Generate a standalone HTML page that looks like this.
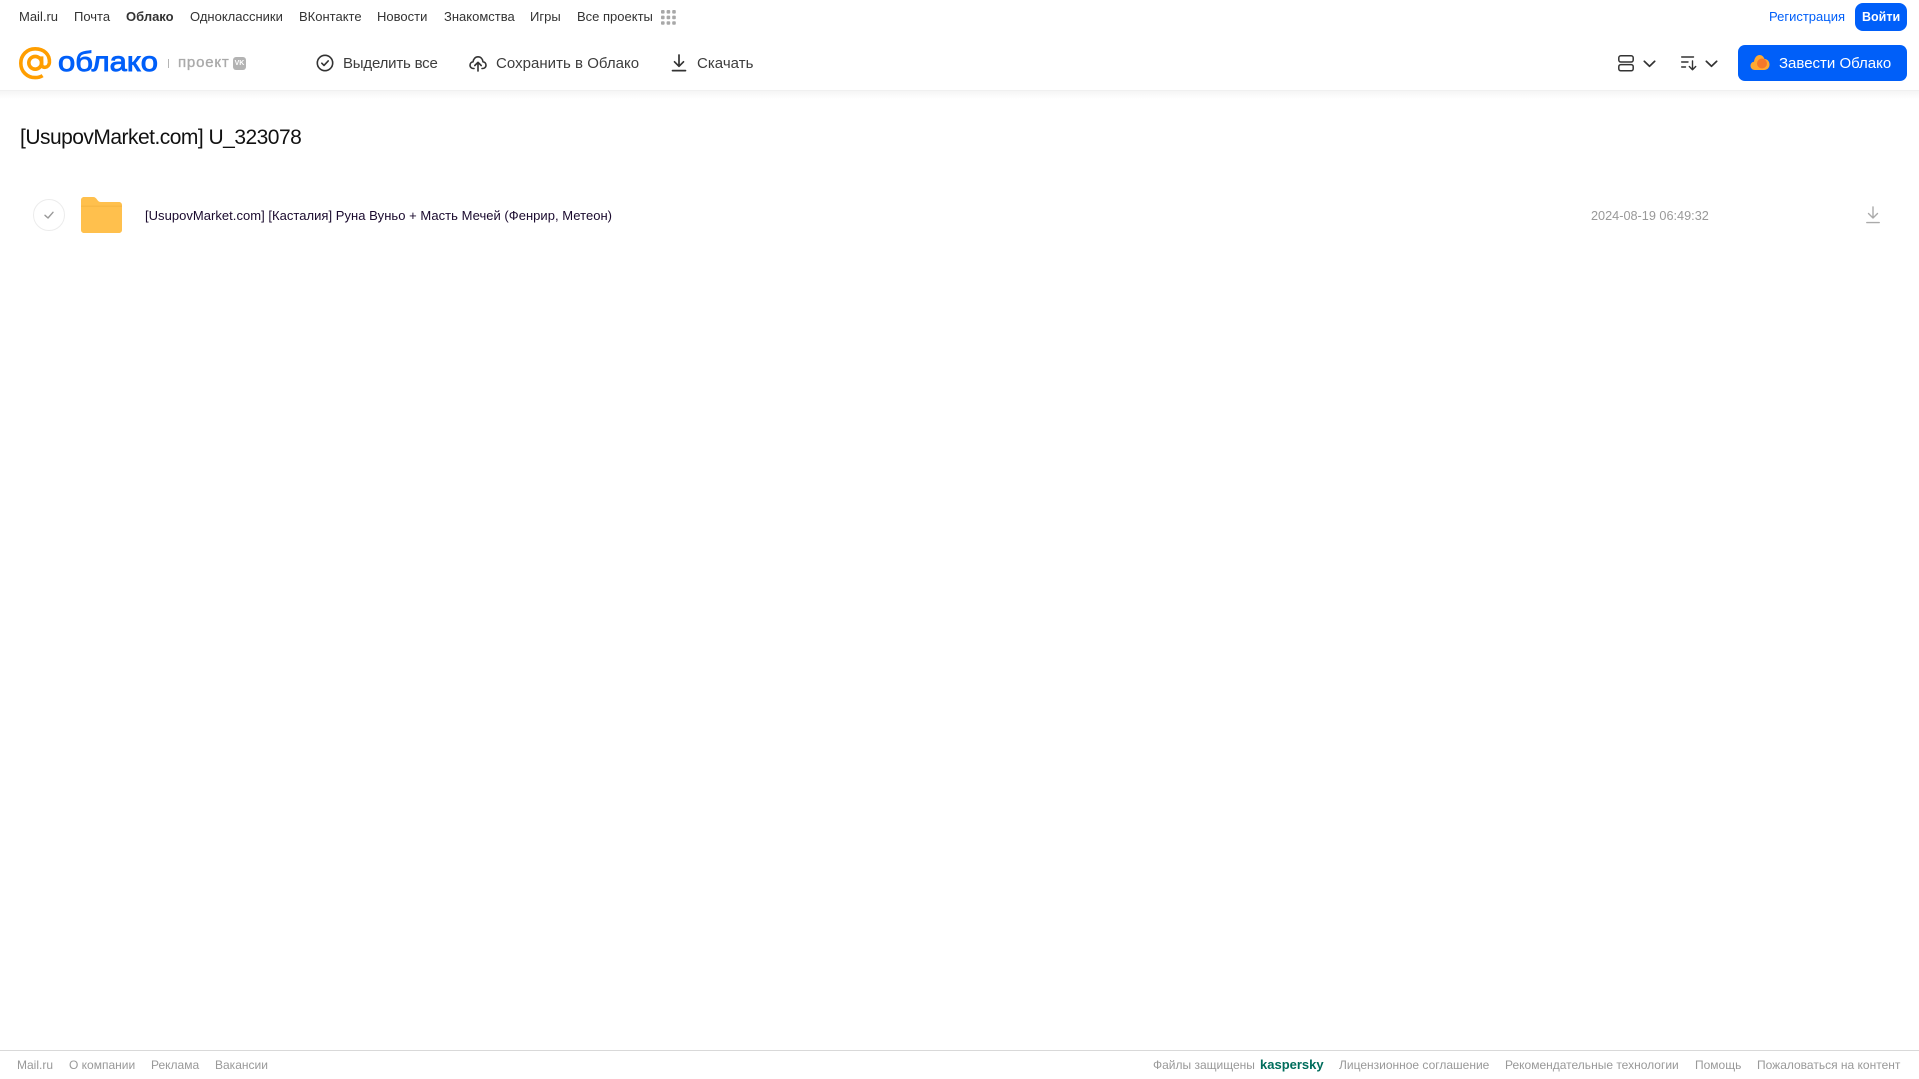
<!DOCTYPE html>
<html lang="ru">
<head>
<meta charset="utf-8">
<title>[UsupovMarket.com] U_323078</title>
<style>
html,body{margin:0;padding:0;background:#fff;}
body{position:relative;width:1919px;height:1079px;overflow:hidden;font-family:"Liberation Sans",Arial,sans-serif;}
a,span.t,h1{position:absolute;white-space:nowrap;text-decoration:none;margin:0;font-weight:normal;}
svg{position:absolute;overflow:visible;}
.nav{top:8px;font-size:13px;line-height:17px;color:#333;}
.tool{top:54px;font-size:15px;line-height:20px;color:#3d3d3d;letter-spacing:.03px;}
.foot{top:1057px;font-size:12px;line-height:16px;color:#999;}
#shadow{position:absolute;left:0;top:91px;width:1919px;height:8px;background:linear-gradient(#f5f5f5,#fff);}
#header-line{position:absolute;left:0;top:90px;width:1919px;height:1px;background:#f0f0f0;}
#footer-line{position:absolute;left:0;top:1050px;width:1919px;height:1px;background:#d9d9d9;}
.btn{position:absolute;background:#005ff9;}
</style>
</head>
<body>
<a class="nav" href="#" style="left:19px">Mail.ru</a>
<a class="nav" href="#" style="left:74px">Почта</a>
<a class="nav" href="#" style="left:126px;font-weight:bold">Облако</a>
<a class="nav" href="#" style="left:190px">Одноклассники</a>
<a class="nav" href="#" style="left:299px">ВКонтакте</a>
<a class="nav" href="#" style="left:377px">Новости</a>
<a class="nav" href="#" style="left:444px">Знакомства</a>
<a class="nav" href="#" style="left:530px">Игры</a>
<a class="nav" href="#" style="left:577px">Все проекты</a>
<svg style="left:661px;top:10px" width="15" height="15" viewBox="0 0 15 15" fill="#a8a8a8">
<rect x="0" y="0" width="3.6" height="3.6" rx="1"/><rect x="5.6" y="0" width="3.6" height="3.6" rx="1"/><rect x="11.2" y="0" width="3.6" height="3.6" rx="1"/>
<rect x="0" y="5.6" width="3.6" height="3.6" rx="1"/><rect x="5.6" y="5.6" width="3.6" height="3.6" rx="1"/><rect x="11.2" y="5.6" width="3.6" height="3.6" rx="1"/>
<rect x="0" y="11.2" width="3.6" height="3.6" rx="1"/><rect x="5.6" y="11.2" width="3.6" height="3.6" rx="1"/><rect x="11.2" y="11.2" width="3.6" height="3.6" rx="1"/>
</svg>

<a class="nav" href="#" style="left:1769px;color:#005ff9">Регистрация</a>
<div class="btn" style="left:1855px;top:3px;width:52px;height:28px;border-radius:8px"></div>
<a class="nav" href="#" style="left:1862px;top:9px;color:#fff;font-weight:bold;font-size:12.5px">Войти</a>

<!-- logo -->
<svg style="left:19px;top:47px" width="33" height="33" viewBox="0 0 33 33" fill="none" stroke="#ff9e00" stroke-width="3.6">
<circle cx="16.2" cy="15.8" r="6.4"/>
<path d="M22.6 9.4V17.5C22.6 21.5 29.8 21.5 30.4 15.5C31 7.5 25 1.8 16.2 1.8C8 1.8 1.8 8 1.8 16.2C1.8 24.6 8.2 30.6 16.2 30.6C19.2 30.6 21.4 30 23.6 28.6"/>
</svg>
<svg style="left:58px;top:40px" width="110" height="44">
<text x="0" y="31" font-family="Liberation Sans,sans-serif" font-size="28" fill="#005ff9" stroke="#005ff9" stroke-width=".9" textLength="100" lengthAdjust="spacingAndGlyphs">облако</text>
</svg>
<div style="position:absolute;left:168px;top:59px;width:1px;height:9px;background:#b5b5b5"></div>
<span class="t" style="left:178px;top:53px;font-size:15px;line-height:20px;color:#aaa;letter-spacing:.8px;-webkit-text-stroke:.35px #aaa">проект</span>
<div style="position:absolute;left:233px;top:57px;width:13px;height:13px;border-radius:3px;background:#b3b3b3;color:#fff;font-size:7px;font-weight:bold;line-height:13px;text-align:center">VK</div>

<!-- toolbar -->
<svg style="left:316px;top:54px" width="18" height="18" viewBox="0 0 18 18" fill="none" stroke="#333" stroke-width="1.6" stroke-linecap="round" stroke-linejoin="round">
<circle cx="9" cy="9" r="7.7"/><path d="M5.8 9.2L8 11.4L12.2 6.9"/>
</svg>
<a class="tool" href="#" style="left:343px;letter-spacing:-.2px">Выделить все</a>
<svg style="left:469px;top:54px" width="18" height="18" viewBox="0 0 18 18" fill="none" stroke="#333" stroke-width="1.6" stroke-linecap="round" stroke-linejoin="round">
<path d="M5 14.5H4.5C2.5 14.5 1 13 1 11.2C1 9.4 2.4 8 4 7.8C4.4 4.8 6.5 2.8 9 2.8C11.6 2.8 13.6 4.8 14 7.8C15.8 8 17 9.4 17 11.2C17 13 15.5 14.5 13.5 14.5H13"/>
<path d="M9 17V8.5M5.8 11.5L9 8.3L12.2 11.5"/>
</svg>
<a class="tool" href="#" style="left:496px">Сохранить в Облако</a>
<svg style="left:670px;top:54px" width="18" height="18" viewBox="0 0 18 18" fill="none" stroke="#333" stroke-width="1.7" stroke-linecap="round" stroke-linejoin="round">
<path d="M9 1V12M4.5 7.8L9 12.3L13.5 7.8M2.5 16.6H15.5"/>
</svg>
<a class="tool" href="#" style="left:697px">Скачать</a>

<!-- view + sort -->
<svg style="left:1618px;top:55px" width="16" height="17" viewBox="0 0 16 17" fill="none" stroke="#333" stroke-width="1.5">
<rect x=".8" y=".8" width="14.4" height="6.2" rx="2"/><rect x=".8" y="9.6" width="14.4" height="6.2" rx="2"/>
</svg>
<svg style="left:1643px;top:60px" width="13" height="8" viewBox="0 0 13 8" fill="none" stroke="#333" stroke-width="1.7" stroke-linecap="round" stroke-linejoin="round"><path d="M1.3 1.3L6.5 6.3L11.7 1.3"/></svg>
<svg style="left:1681px;top:56px" width="17" height="15" viewBox="0 0 17 15" fill="none" stroke="#333" stroke-width="1.4" stroke-linecap="round" stroke-linejoin="round">
<path d="M.7 1H12.5M.7 6H7M.7 11H4.500M11.500 5V13.500M8.300 10.500L11.500 13.700L14.700 10.500"/>
</svg>
<svg style="left:1705px;top:60px" width="13" height="8" viewBox="0 0 13 8" fill="none" stroke="#333" stroke-width="1.7" stroke-linecap="round" stroke-linejoin="round"><path d="M1.3 1.3L6.5 6.3L11.7 1.3"/></svg>

<div class="btn" style="left:1738px;top:45px;width:169px;height:36px;border-radius:7px"></div>
<svg style="left:1750px;top:54px" width="20" height="17" viewBox="0 0 20 17">
<path d="M5 16C2 16 .5 14 .5 11.8C.5 9.6 2 8 4 7.8C4.500 3.500 7 1 9.500 1C12 1 13.500 2.500 14.500 5C17.500 5 19.500 7.500 19.500 10.500C19.500 14 17 16 14 16Z" fill="#ffa930"/>
<circle cx="12" cy="9.500" r="5" fill="#f4782a"/>
</svg>
<a class="tool" href="#" style="left:1779px;color:#fff;letter-spacing:0">Завести Облако</a>

<div id="header-line"></div>
<div id="shadow"></div>

<!-- content -->
<h1 style="left:20px;top:124px;font-size:21px;line-height:28px;letter-spacing:-.52px;color:#111">[UsupovMarket.com] U_323078</h1>

<svg style="left:33px;top:199px" width="32" height="32" viewBox="0 0 32 32" fill="none">
<circle cx="16" cy="16" r="15.5" stroke="#ececec"/>
<path d="M12 16.300L15 19L20 13.300" stroke="#999" stroke-width="1.400" stroke-linecap="round" stroke-linejoin="round"/>
</svg>
<svg style="left:81px;top:197px" width="41" height="36" viewBox="0 0 41 36">
<path d="M0 3C0 1.300 1.300 0 3 0H12C14 0 15 1 16 2.500C17 4 18 5 20 5H38C39.700 5 41 6.300 41 8V33C41 34.700 39.700 36 38 36H3C1.300 36 0 34.700 0 33Z" fill="#ffc04d"/>
<path d="M0 10H41V8.500H0Z" fill="#f2b13f" opacity=".55"/>
</svg>
<a href="#" style="left:145px;top:207px;font-size:13px;line-height:17px;letter-spacing:.03px;color:#1a0a2e">[UsupovMarket.com] [Касталия] Руна Вуньо + Масть Мечей (Фенрир, Метеон)</a>
<span class="t" style="left:1591px;top:208px;font-size:12.7px;line-height:17px;color:#999">2024-08-19 06:49:32</span>
<svg style="left:1866px;top:206px" width="14" height="18" viewBox="0 0 14 18" fill="none" stroke="#aaa" stroke-width="1.400" stroke-linecap="round" stroke-linejoin="round">
<path d="M7 1V12M2.500 7.500L7 12L11.500 7.500M.8 16.600H13.200"/>
</svg>

<!-- footer -->
<div id="footer-line"></div>
<a class="foot" href="#" style="left:17px">Mail.ru</a>
<a class="foot" href="#" style="left:69px">О компании</a>
<a class="foot" href="#" style="left:151px">Реклама</a>
<a class="foot" href="#" style="left:215px">Вакансии</a>
<span class="t foot" style="left:1153px">Файлы защищены</span>
<a class="foot" href="#" style="left:1260px;color:#006d5c;font-weight:bold;font-size:13px">kaspersky</a>
<a class="foot" href="#" style="left:1339px">Лицензионное соглашение</a>
<a class="foot" href="#" style="left:1505px">Рекомендательные технологии</a>
<a class="foot" href="#" style="left:1695px">Помощь</a>
<a class="foot" href="#" style="left:1757px">Пожаловаться на контент</a>
</body>
</html>
